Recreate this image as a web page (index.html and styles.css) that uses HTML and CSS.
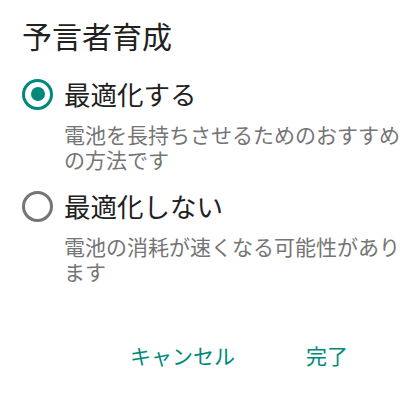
FILE: index.html
```html
<!DOCTYPE html>
<html lang="ja">
<head>
<meta charset="utf-8">
<link rel="stylesheet" href="styles.css">
</head>
<body>
<div class="dialog">
  <h1 class="title">予言者育成</h1>
  <div class="option">
    <span class="radio checked"><span class="dot"></span></span>
    <span class="label">最適化する</span>
  </div>
  <p class="desc">電池を長持ちさせるためのおすすめの方法です</p>
  <div class="option">
    <span class="radio"></span>
    <span class="label">最適化しない</span>
  </div>
  <p class="desc">電池の消耗が速くなる可能性があります</p>
  <div class="actions">
    <span class="btn cancel">キャンセル</span>
    <span class="btn done">完了</span>
  </div>
</div>
</body>
</html>
```
FILE: styles.css
```css
html, body {
  margin: 0;
  padding: 0;
  background: #ffffff;
}
body {
  font-family: "Noto Sans CJK JP", "Noto Sans", sans-serif;
  width: 400px;
  height: 400px;
  overflow: hidden;
}
.dialog {
  padding: 17px 0 0 22px;
}
.title {
  margin: 0;
  font-size: 30px;
  font-weight: 400;
  line-height: 36px;
  color: #212121;
}
.option {
  display: flex;
  align-items: center;
  height: 40px;
  gap: 11px;
}
.option:first-of-type {
  margin-top: 21px;
}
.radio {
  box-sizing: border-box;
  width: 31px;
  height: 31px;
  border: 3.5px solid #757575;
  border-radius: 50%;
  display: flex;
  align-items: center;
  justify-content: center;
  flex: none;
}
.radio.checked {
  border-color: #00897b;
}
.dot {
  width: 14px;
  height: 14px;
  border-radius: 50%;
  background: #00897b;
}
.label {
  font-size: 26.5px;
  line-height: 40px;
  color: #212121;
}
.desc {
  margin: 8px 0 14px 42px;
  width: 336px;
  font-size: 21px;
  line-height: 25px;
  color: #757575;
}
.actions {
  display: flex;
  margin-top: 56px;
  padding-left: 108px;
  gap: 71px;
}
.btn {
  font-size: 21px;
  line-height: 30px;
  color: #00897b;
}
```
